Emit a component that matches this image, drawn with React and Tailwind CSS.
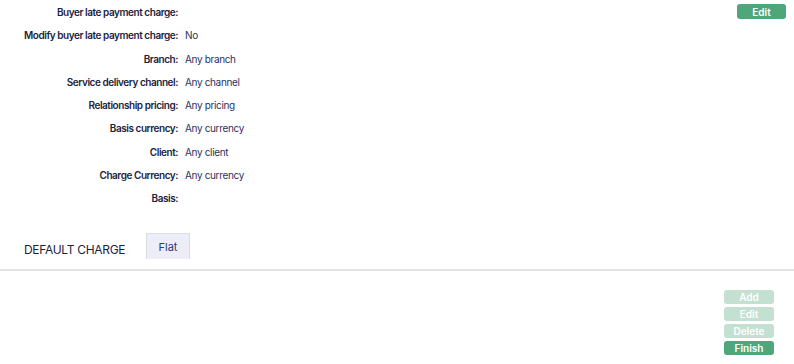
import React from "react";

const rows = [
  { label: "Buyer late payment charge:", value: "" },
  { label: "Modify buyer late payment charge:", value: "No" },
  { label: "Branch:", value: "Any branch" },
  { label: "Service delivery channel:", value: "Any channel" },
  { label: "Relationship pricing:", value: "Any pricing" },
  { label: "Basis currency:", value: "Any currency" },
  { label: "Client:", value: "Any client" },
  { label: "Charge Currency:", value: "Any currency" },
  { label: "Basis:", value: "" },
];

const App = () => {
  return (
    <div className="w-[794px] h-[364px] bg-white overflow-hidden font-['Inter','Liberation_Sans',sans-serif] text-[#1c2340]">
      <div className="flex justify-between pt-[1px]">
        <div className="flex flex-col">
          {rows.map((row) => (
            <div key={row.label} className="flex items-center h-[23.25px] text-[10px]">
              <div className="w-[178px] text-right font-semibold tracking-[-0.45px]">{row.label}</div>
              <div className="pl-[7px] text-[#2b3160] tracking-[-0.35px]">{row.value}</div>
            </div>
          ))}
        </div>
        <div className="flex items-start pr-[8px] pt-[3px]">
          <button className="w-[49px] h-[15px] rounded-[3px] bg-[#4fa67b] text-white text-[10px] font-semibold leading-none">
            Edit
          </button>
        </div>
      </div>

      <div className="flex items-end mt-[23px] border-b-2 border-[#e3e3e6]">
        <div className="pl-[24px] w-[146px] pb-[10px] text-[12px] text-[#1c2340] tracking-[-0.3px]">DEFAULT CHARGE</div>
        <div className="w-[44px] h-[26px] mb-[10px] flex items-center justify-center bg-[#ededf7] border border-b-0 border-[#dcdce4] text-[11px] text-[#2c3a78]">
          Flat
        </div>
      </div>

      <div className="flex justify-end pr-[20px] pt-[19px]">
        <div className="flex flex-col gap-[3px]">
          {["Add", "Edit", "Delete"].map((b) => (
            <button key={b} className="w-[50px] h-[14px] rounded-[3px] bg-[#c3e0d1] text-white text-[10px] font-semibold leading-none">
              {b}
            </button>
          ))}
          <button className="w-[50px] h-[14px] rounded-[3px] bg-[#4fa67b] text-white text-[10px] font-semibold leading-none">
            Finish
          </button>
        </div>
      </div>
    </div>
  );
};

export default App;
